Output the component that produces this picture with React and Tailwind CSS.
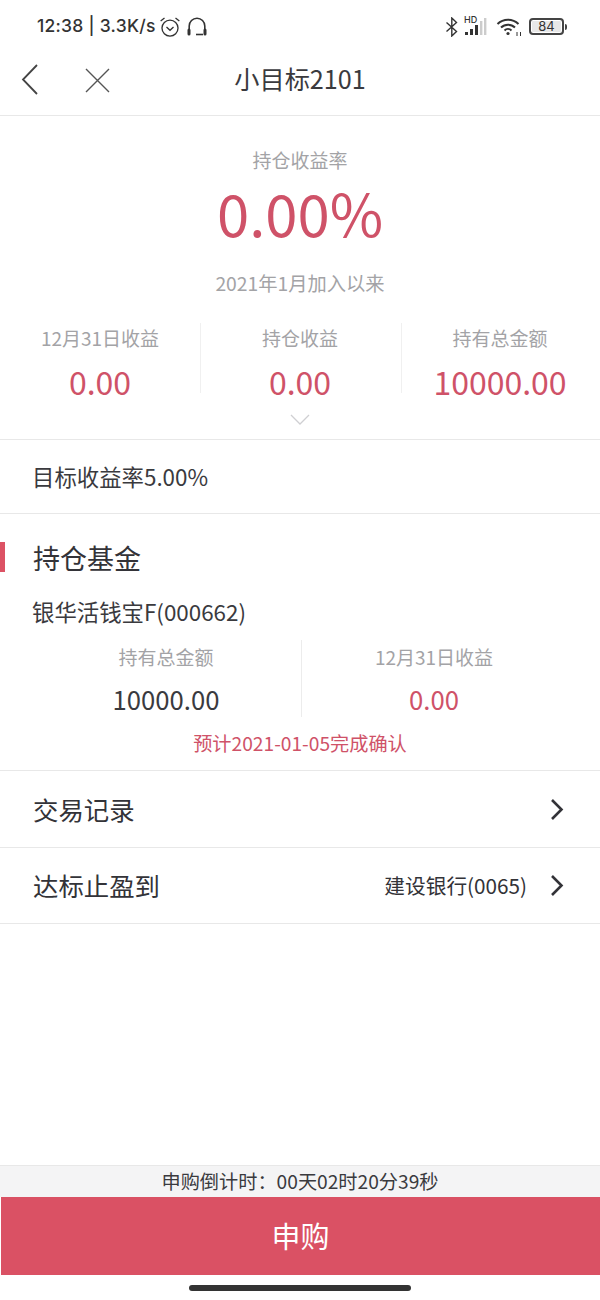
import React from "react";

const cjk = "font-['Noto_Sans_CJK_SC','Noto_Sans',sans-serif]";

function Stat({ label, value, w, last }) {
  return (
    <div className={`${w} h-[70px] flex flex-col items-center ${last ? "" : "border-r border-[#f0f0f0]"}`}>
      <div className="text-[19px] leading-[30px] text-[#a3a3a6]">{label}</div>
      <div className="text-[32px] leading-[46px] mt-[5px] text-[#cf5268]">{value}</div>
    </div>
  );
}

function Row({ label, right, h }) {
  return (
    <div className={`${h} flex items-center justify-between pl-[33px] pr-[35px] border-b border-[#e8e8e8] text-[#333338]`}>
      <div className="text-[25.4px]">{label}</div>
      <div className="flex items-center">
        {right && <span className="text-[20.7px] mr-[22px]">{right}</span>}
        <svg width="16" height="24" viewBox="0 0 16 24" fill="none" stroke="#333338" strokeWidth="2.6"><path d="M3 3l9.5 9.5L3 22" /></svg>
      </div>
    </div>
  );
}

export default function App() {
  return (
    <div className={`${cjk} w-[600px] h-[1300px] bg-white flex flex-col overflow-hidden`}>
      <div className="h-[50px] flex items-center justify-between pl-[37px] pr-[33px] pt-[3px] font-['Inter',sans-serif] text-[#333]">
        <div className="flex items-center">
          <span className="text-[17.5px] font-medium tracking-[0.25px] whitespace-pre">12:38 | 3.3K/s</span>
          <svg width="22" height="22" viewBox="0 0 20 20" fill="none" stroke="#333" strokeWidth="1.2" className="ml-[3px]"><circle cx="10" cy="11" r="7.3" /><path d="M6.8 10l3.2 3 3.2-3M1.5 4.5L5 1.8M18.5 4.5L15 1.8" /></svg>
          <svg width="22" height="20" viewBox="0 0 22 20" fill="none" className="ml-[5px]" stroke="#333" strokeWidth="1.6"><path d="M3.2 15V9a7.8 7.8 0 0 1 15.6 0v6" /><path d="M3 13v4M19 13v4" strokeWidth="3" strokeLinecap="round" /><path d="M10 17.5h7" /></svg>
        </div>
        <div className="flex items-center">
          <svg width="14" height="20" viewBox="0 0 14 20" fill="none" stroke="#333" strokeWidth="1.4"><path d="M1.5 5.5l10 9-4.7 4.5V1l4.7 4.5-10 9" /></svg>
          <div className="relative w-[24px] h-[20px] ml-[5px]">
            <span className="absolute left-0 top-[-2px] text-[9px] font-medium leading-[10px]">HD</span>
            <svg width="24" height="20" viewBox="0 0 24 20" className="absolute left-0 top-0"><rect x="1" y="15" width="3" height="3" fill="#333" /><rect x="6" y="12" width="3" height="6" fill="#333" /><rect x="11" y="8" width="3" height="10" fill="#333" /><rect x="16" y="4" width="2.4" height="14" fill="#ccc" /><rect x="20" y="1" width="2.4" height="17" fill="#ccc" /></svg>
          </div>
          <svg width="26" height="20" viewBox="0 0 26 20" fill="none" stroke="#333" strokeWidth="2" className="ml-[8px]"><path d="M1.5 7a15 15 0 0 1 21 0M5 10.5a10 10 0 0 1 14 0M8.5 13.5a5 5 0 0 1 7 0" /><circle cx="12" cy="16.5" r="1.6" fill="#333" stroke="none" /><path d="M21 15v4M24.5 15v4" strokeWidth="1" /></svg>
          <div className="ml-[7px] w-[35px] h-[17px] border-2 border-[#444] rounded-[4px] flex items-center justify-center text-[13px] leading-none bg-[#e8e8e8] shadow-[inset_0_0_0_1px_#fff]">84</div>
          <div className="w-[2px] h-[6px] ml-[1px] bg-[#444] rounded-r" />
        </div>
      </div>

      <div className="relative h-[66px] pb-[8px] border-b border-[#e8e8e8] flex items-center justify-center text-[#3a3a3e] text-[25.2px]">
        <svg width="20" height="32" viewBox="0 0 20 32" fill="none" stroke="#444" strokeWidth="1.8" className="absolute left-[21px] top-[14px]"><path d="M16 1L2 15.5 16 30" /></svg>
        <svg width="26" height="26" viewBox="0 0 26 26" fill="none" stroke="#555" strokeWidth="1.4" className="absolute left-[85px] top-[18px]"><path d="M1 1l23 23M24 1L1 24" /></svg>
        小目标2101
      </div>

      <div className="h-[324px] border-b border-[#e8e8e8] flex flex-col items-center">
        <div className="text-[19px] leading-[26px] mt-[31px] text-[#a3a3a6]">持仓收益率</div>
        <div className="text-[58px] leading-[60px] mt-[9px] text-[#cf5268]">0.00%</div>
        <div className="text-[19.3px] leading-[28px] mt-[27px] text-[#a3a3a6]">2021年1月加入以来</div>
        <div className="flex w-full mt-[26px]">
          <Stat label="12月31日收益" value="0.00" w="w-[201px]" />
          <Stat label="持仓收益" value="0.00" w="w-[201px] pr-[2px]" />
          <Stat label="持有总金额" value="10000.00" w="flex-1 pr-[2px]" last />
        </div>
        <svg width="20" height="12" viewBox="0 0 20 12" fill="none" stroke="#cfcfd2" strokeWidth="1.3" className="mt-[21px]"><path d="M1 1l9 9 9-9" /></svg>
      </div>

      <div className="h-[74px] flex items-center pl-[32px] border-b border-[#e8e8e8] text-[22.4px] text-[#3a3a3e]">目标收益率5.00%</div>

      <div className="relative h-[90px] flex items-center pl-[33px] pb-[2px] text-[27px] text-[#333338]">
        <div className="absolute left-0 top-[28px] w-[5px] h-[30px] bg-[#dc5264]" />
        持仓基金
      </div>
      <div className="pl-[32px] text-[22.4px] leading-[30px] text-[#3a3a3e] mt-[-8px]">银华活钱宝F(000662)</div>

      <div className="flex mt-[14px] h-[77px]">
        <div className="w-[302px] pl-[31px] border-r border-[#ececec] flex flex-col items-center">
          <div className="text-[19px] leading-[34px] text-[#a3a3a6]">持有总金额</div>
          <div className="text-[25.7px] leading-[40px] mt-[5px] text-[#3a3a3e]">10000.00</div>
        </div>
        <div className="flex-1 flex flex-col items-center pr-[34px]">
          <div className="text-[19px] leading-[34px] text-[#a3a3a6]">12月31日收益</div>
          <div className="text-[25.7px] leading-[40px] mt-[5px] text-[#cf5268]">0.00</div>
        </div>
      </div>
      <div className="text-center text-[19.2px] leading-[26px] text-[#cf5268] mt-[13px] pb-[14px] border-b border-[#e8e8e8]">预计2021-01-05完成确认</div>

      <Row label="交易记录" h="h-[77px]" />
      <Row label="达标止盈到" right="建设银行(0065)" h="h-[76px]" />

      <div className="flex-1" />

      <div className="h-[32px] bg-[#f4f4f5] border-t border-[#e8e8e8] flex items-center justify-center text-[19.2px] text-[#3a3a3e]">申购倒计时：00天02时20分39秒</div>
      <div className="h-[78px] bg-[#da5164] ml-[1px] flex items-center justify-center text-white text-[29px]">申购</div>
      <div className="h-[25px] flex justify-center pt-[10px]">
        <div className="w-[222px] h-[6px] rounded-full bg-[#333]" />
      </div>
    </div>
  );
}
